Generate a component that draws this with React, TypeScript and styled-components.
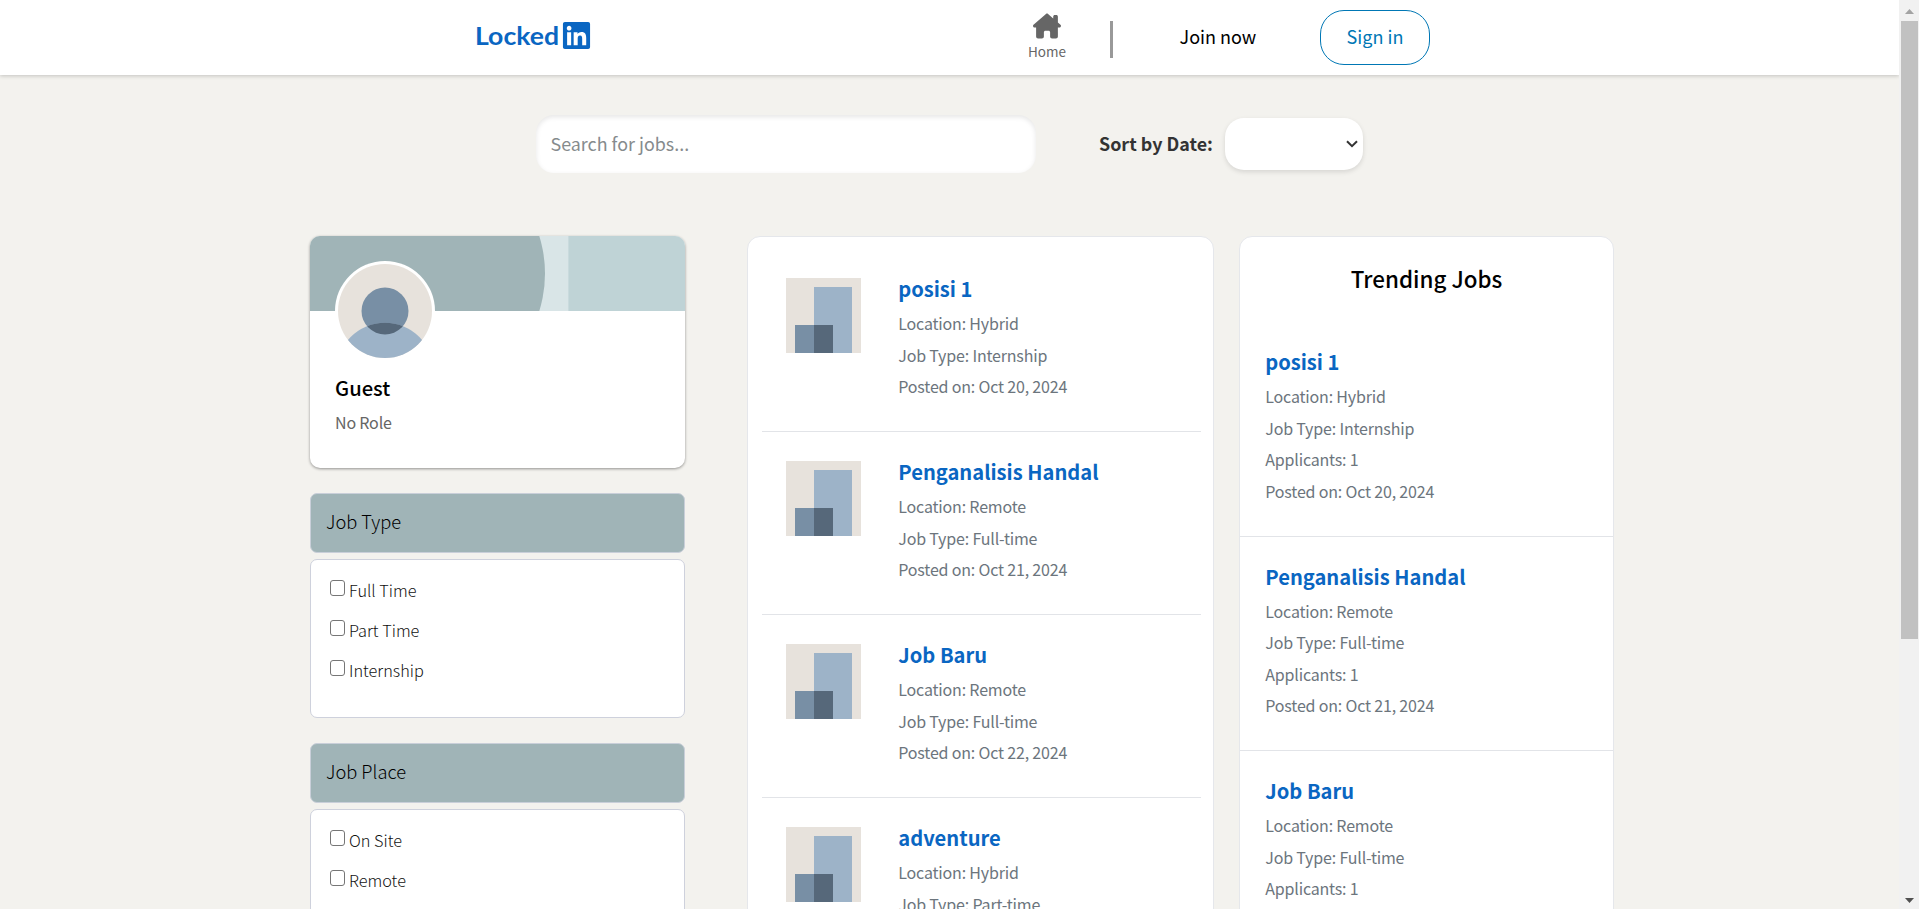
import React from "react";
import styled, { createGlobalStyle } from "styled-components";
import { FaHouseChimney } from "react-icons/fa6";
import { FaLinkedin } from "react-icons/fa";

const GlobalStyle = createGlobalStyle`
  * { box-sizing: border-box; }
  body {
    margin: 0;
    overflow: hidden;
    background: #f3f2ee;
    font-family: "Noto Sans CJK SC", "Noto Sans", sans-serif;
    color: #000;
  }
  p, h1, h2, h3 { margin: 0; }
`;

const Window = styled.div`
  display: flex;
  height: 909px;
  overflow: hidden;
`;

const Page = styled.div`
  flex: 1;
  height: 909px;
  overflow: hidden;
`;

const ScrollTrack = styled.div`
  width: 20px;
  padding: 9px 1px 6px 2px;
  background: #f1f1f1;
  display: flex;
  flex-direction: column;
  align-items: center;
`;

const ScrollThumb = styled.div`
  width: 17px;
  height: 618px;
  margin: 7px 0 auto;
  background: #c1c1c1;
`;

const Arrow = styled.svg`
  display: block;
  width: 9px;
  height: 5px;
`;

const Header = styled.header`
  display: flex;
  align-items: center;
  height: 75px;
  padding-left: 476px;
  background: #fff;
  box-shadow: 0 1px 4px rgba(0, 0, 0, 0.2);
`;

const Brand = styled.a`
  display: flex;
  align-items: center;
  width: 115px;
  height: 28px;
  margin-top: -4px;
  color: #0a66c2;
`;

const BrandWord = styled.svg`
  display: block;
  width: 85.5px;
  height: 28px;
  overflow: visible;
  font-family: Lato, sans-serif;
  font-weight: 700;
  font-size: 25px;
`;

const BrandMark = styled(FaLinkedin)`
  display: block;
  width: 29px;
  height: 31px;
  flex: none;
`;

const HomeLink = styled.a`
  display: flex;
  flex-direction: column;
  align-items: center;
  width: 60px;
  margin: -2px 0 0 426px;
  color: #666;
  font-size: 13.5px;
  line-height: 20px;
  svg { display: block; margin-bottom: 1px; }
`;

const Divider = styled.div`
  width: 3px;
  height: 37px;
  margin: 4px 0 0 33px;
  background: #999;
`;

const JoinLink = styled.a`
  width: 78px;
  margin: -3px 0 0 66.5px;
  font-size: 18px;
  line-height: 30px;
  white-space: nowrap;
`;

const SignIn = styled.button`
  width: 110px;
  height: 55px;
  margin-left: 62.5px;
  padding: 0 0 3px;
  border: 1px solid #0077b5;
  border-radius: 24px;
  background: #fff;
  color: #0077b5;
  font: 400 18px/30px "Noto Sans CJK SC", sans-serif;
`;

const SearchRow = styled.div`
  display: flex;
  align-items: center;
  height: 58px;
  margin: 40px 0 0 536px;
`;

const SearchInput = styled.input`
  width: 500px;
  height: 58px;
  padding: 0 14.5px 3px;
  border: 0;
  border-radius: 18px;
  background: #fff;
  box-shadow: inset 0 2px 5px rgba(0, 0, 0, 0.1);
  font: 400 17.9px/30px "Noto Sans CJK SC", sans-serif;
  &::placeholder { color: #868b8d; opacity: 1; }
`;

const SortLabel = styled.label`
  width: 126px;
  margin: -3px 0 0 63px;
  color: #333;
  font-size: 17.9px;
  font-weight: 700;
  line-height: 30px;
  white-space: nowrap;
`;

const SortSelect = styled.div`
  display: flex;
  align-items: center;
  justify-content: flex-end;
  width: 138px;
  height: 52px;
  padding-right: 5px;
  border-radius: 19px;
  background: #fff;
  box-shadow: 0 2px 5px rgba(0, 0, 0, 0.12);
`;

const Columns = styled.main`
  display: flex;
  align-items: flex-start;
  margin: 63px 0 0 310px;
`;

const Sidebar = styled.aside`
  width: 375px;
`;

const ProfileCard = styled.section`
  height: 232px;
  border-radius: 10px;
  background: #fff;
  overflow: hidden;
  box-shadow: 0 1px 3px rgba(0, 0, 0, 0.4);
`;

const Banner = styled.svg`
  display: block;
  width: 375px;
  height: 75px;
`;

const Avatar = styled.svg`
  display: block;
  position: relative;
  width: 100px;
  height: 100px;
  margin: -50px 0 0 25px;
`;

const ProfileName = styled.h2`
  margin: 11px 0 0 25px;
  font-size: 20.2px;
  font-weight: 500;
  line-height: 32px;
`;

const ProfileRole = styled.p`
  margin: 1px 0 0 25px;
  color: #666;
  font-size: 16px;
  letter-spacing: -0.18px;
  line-height: 34px;
`;

const FilterGroup = styled.section`
  margin-top: 25px;
  font-weight: 300;
`;

const FilterTitle = styled.h3`
  height: 60px;
  padding-left: 15px;
  border: 1px solid #c9cfd9;
  border-radius: 7px;
  background: #a0b4b7;
  color: #000;
  font-size: 18.3px;
  font-weight: 300;
  line-height: 55px;
`;

const FilterBody = styled.div`
  height: 158.7px;
  margin-top: 6.3px;
  padding: 10px 0 0 19px;
  border: 1px solid #ced1dc;
  border-radius: 7px;
  background: #fff;
`;

const Option = styled.label`
  display: flex;
  align-items: center;
  height: 40px;
  color: #111;
  font-size: 16.3px;
  line-height: 38px;
`;

const Checkbox = styled.span`
  width: 15px;
  height: 16px;
  margin: -5px 4px 0 0;
  border: 1px solid #767676;
  border-radius: 3px;
  background: #fff;
`;

const JobPanel = styled.section`
  width: 467px;
  height: 800px;
  margin-left: 62px;
  padding: 12px 12px 0 13.5px;
  border: 1px solid #e5e7eb;
  border-radius: 13px;
  background: #fff;
`;

const JobRow = styled.article`
  display: flex;
  height: 183px;
  padding: 25.3px 24.5px 0;
  border-bottom: 1px solid #e2e4e8;
`;

const CompanyLogo = styled.svg`
  display: block;
  flex: none;
  width: 75px;
  height: 75px;
  margin: 3.7px 37.3px 0 0;
`;

const JobTitle = styled.h2`
  margin-bottom: 4px;
  color: #0a66c2;
  font-size: 20.15px;
  font-weight: 700;
  line-height: 30px;
  white-space: nowrap;
`;

const Meta = styled.p`
  color: #6c757d;
  font-size: 16px;
  letter-spacing: -0.18px;
  line-height: 31.4px;
  white-space: nowrap;
`;

const TrendingPanel = styled.section`
  width: 375px;
  height: 800px;
  margin-left: 25px;
  padding-top: 21.4px;
  border: 1px solid #e5e7eb;
  border-radius: 13px;
  background: #fff;
`;

const TrendingHeading = styled.h2`
  margin-bottom: 24px;
  font-size: 22.4px;
  font-weight: 500;
  line-height: 40px;
  text-align: center;
`;

const TrendingItem = styled.article`
  height: 214.4px;
  padding: 25.1px 25.3px 0;
  border-bottom: 1px solid #e2e4e8;
`;

type Job = { title: string; place: string; type: string; applicants: number; date: string };

const jobs: Job[] = [
  { title: "posisi 1", place: "Hybrid", type: "Internship", applicants: 1, date: "Oct 20, 2024" },
  { title: "Penganalisis Handal", place: "Remote", type: "Full-time", applicants: 1, date: "Oct 21, 2024" },
  { title: "Job Baru", place: "Remote", type: "Full-time", applicants: 1, date: "Oct 22, 2024" },
  { title: "adventure", place: "Hybrid", type: "Part-time", applicants: 0, date: "Oct 22, 2024" },
];

const filters = [
  { title: "Job Type", options: ["Full Time", "Part Time", "Internship"] },
  { title: "Job Place", options: ["On Site", "Remote"] },
];

function Company() {
  return (
    <CompanyLogo viewBox="0 0 75 75">
      <rect width="75" height="75" fill="#e7e2dc" />
      <rect x="28" y="9" width="38" height="66" fill="#9db3c8" />
      <rect x="9" y="47" width="19" height="28" fill="#788fa5" />
      <rect x="28" y="47" width="19" height="28" fill="#56687a" />
    </CompanyLogo>
  );
}

function Profile() {
  return (
    <ProfileCard>
      <Banner viewBox="0 0 375 75">
        <rect width="375" height="75" fill="#d9e5e7" />
        <circle cx="109" cy="37.5" r="126" fill="#a0b4b7" />
        <rect x="258.4" width="117" height="75" fill="#bfd3d6" />
      </Banner>
      <Avatar viewBox="0 0 100 100">
        <defs>
          <clipPath id="face"><circle cx="50" cy="50" r="47" /></clipPath>
          <clipPath id="head"><circle cx="50" cy="50" r="23.5" /></clipPath>
        </defs>
        <circle cx="50" cy="50" r="50" fill="#fff" />
        <g clipPath="url(#face)">
          <rect width="100" height="100" fill="#e7e2dc" />
          <circle cx="50" cy="50" r="23.5" fill="#788fa5" />
          <circle cx="50" cy="110.3" r="48.6" fill="#9db3c8" />
        </g>
        <circle cx="50" cy="110.3" r="48.6" fill="#56687a" clipPath="url(#head)" />
      </Avatar>
      <ProfileName>Guest</ProfileName>
      <ProfileRole>No Role</ProfileRole>
    </ProfileCard>
  );
}

export default function App() {
  return (
    <Window>
      <GlobalStyle />
      <Page>
        <Header>
          <Brand>
            <BrandWord>
              <text x="-1" y="23" textLength="84" lengthAdjust="spacingAndGlyphs" fill="#0a66c2">Locked</text>
            </BrandWord>
            <BrandMark />
          </Brand>
          <HomeLink>
            <FaHouseChimney size={28} />
            Home
          </HomeLink>
          <Divider />
          <JoinLink>Join now</JoinLink>
          <SignIn>Sign in</SignIn>
        </Header>
        <SearchRow>
          <SearchInput placeholder="Search for jobs..." />
          <SortLabel>Sort by Date:</SortLabel>
          <SortSelect>
            <svg width="12" height="8" viewBox="0 0 12 8" fill="none" stroke="#333" strokeWidth="2">
              <path d="M1 1.2 L6 6.2 L11 1.2" />
            </svg>
          </SortSelect>
        </SearchRow>
        <Columns>
          <Sidebar>
            <Profile />
            {filters.map((f) => (
              <FilterGroup key={f.title}>
                <FilterTitle>{f.title}</FilterTitle>
                <FilterBody>
                  {f.options.map((o) => (
                    <Option key={o}><Checkbox />{o}</Option>
                  ))}
                </FilterBody>
              </FilterGroup>
            ))}
          </Sidebar>
          <JobPanel>
            {jobs.map((j) => (
              <JobRow key={j.title}>
                <Company />
                <div>
                  <JobTitle>{j.title}</JobTitle>
                  <Meta>Location: {j.place}</Meta>
                  <Meta>Job Type: {j.type}</Meta>
                  <Meta>Posted on: {j.date}</Meta>
                </div>
              </JobRow>
            ))}
          </JobPanel>
          <TrendingPanel>
            <TrendingHeading>Trending Jobs</TrendingHeading>
            {jobs.slice(0, 3).map((j) => (
              <TrendingItem key={j.title}>
                <JobTitle>{j.title}</JobTitle>
                <Meta>Location: {j.place}</Meta>
                <Meta>Job Type: {j.type}</Meta>
                <Meta>Applicants: {j.applicants}</Meta>
                <Meta>Posted on: {j.date}</Meta>
              </TrendingItem>
            ))}
          </TrendingPanel>
        </Columns>
      </Page>
      <ScrollTrack>
        <Arrow viewBox="0 0 9 5"><path d="M4.5 0 L9 5 H0 Z" fill="#a3a3a3" /></Arrow>
        <ScrollThumb />
        <Arrow viewBox="0 0 9 5"><path d="M0 0 H9 L4.5 5 Z" fill="#505050" /></Arrow>
      </ScrollTrack>
    </Window>
  );
}
